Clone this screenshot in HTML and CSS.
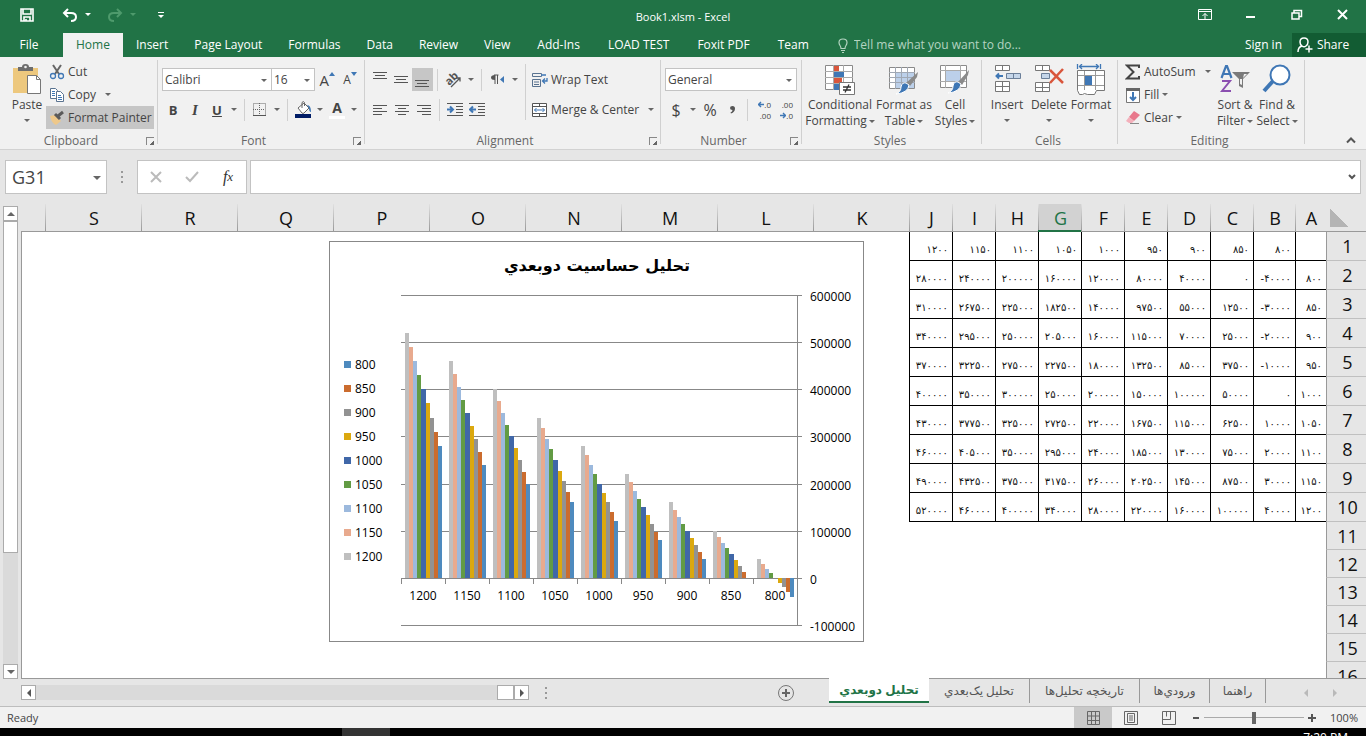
FILE: index.html
```html
<!DOCTYPE html>
<html lang="en">
<head>
    <meta charset="UTF-8">
    <meta name="viewport" content="width=device-width, initial-scale=1.0">
    <title>Book1.xlsm - Excel</title>
    <link rel="stylesheet" href="styles.css">
</head>
<body>
    <header class="titlebar">
        <div class="quick">
            <button class="qbtn save" aria-label="Save"><svg width="14" height="14" viewBox="0 0 14 14"><path d="M1 1h12v12H1zM3 1v5h8V1M4 13V9h6v4M6 11v2" fill="none" stroke="#fff" stroke-width="1.600"/></svg></button>
            <button class="qbtn undo" aria-label="Undo"><svg width="16" height="14" viewBox="0 0 16 14"><path d="M6 1L2 5l4 4M2 5h7q5 0 5 4t-5 4" fill="none" stroke="#fff" stroke-width="2"/></svg></button>
            <button class="qbtn" aria-label="Undo list"><i class="caret light"></i></button>
            <button class="qbtn redo" aria-label="Redo"><svg width="16" height="14" viewBox="0 0 16 14"><path d="M10 1l4 4-4 4M14 5H7q-5 0-5 4t5 4" fill="none" stroke="#4e9a6c" stroke-width="2"/></svg></button>
            <button class="qbtn" aria-label="Redo list"><i class="caret dim"></i></button>
            <button class="qbtn custom" aria-label="Customize toolbar"><i class="bar"></i><i class="caret light"></i></button>
        </div>
        <h1>Book1.xlsm - Excel</h1>
        <div class="window">
            <button aria-label="Ribbon display options"><svg width="14" height="12" viewBox="0 0 14 12"><path d="M.5.5h13v10H.5zM.5 2.500h13M7 10V4.500M4.500 7L7 4.500 9.500 7" fill="none" stroke="#fff"/></svg></button>
            <button aria-label="Minimize"><svg width="10" height="10"><path d="M0 6h9v2H0z" fill="#fff"/></svg></button>
            <button aria-label="Restore"><svg width="12" height="12" viewBox="0 0 12 12"><path d="M1 4h7v6H1zM3 4V1.500h7.500v6H8" fill="none" stroke="#fff" stroke-width="1.500"/></svg></button>
            <button aria-label="Close"><svg width="12" height="12" viewBox="0 0 12 12"><path d="M1 1l9 9M10 1l-9 9" stroke="#fff" stroke-width="2"/></svg></button>
        </div>
    </header>

    <nav class="tabs">
        <a href="#" class="file">File</a>
        <a href="#" class="active">Home</a>
        <a href="#">Insert</a>
        <a href="#">Page Layout</a>
        <a href="#">Formulas</a>
        <a href="#">Data</a>
        <a href="#">Review</a>
        <a href="#">View</a>
        <a href="#" class="addin">Add-Ins</a>
        <a href="#" class="addin">LOAD TEST</a>
        <a href="#" class="addin">Foxit PDF</a>
        <a href="#" class="addin">Team</a>
        <label class="tell" for="tell"><svg width="10" height="15" viewBox="0 0 10 15"><path d="M3 10.500Q3 9 2 7.500 1 6 1 4.500 1 1 5 1t4 3.500Q9 6 8 7.500T7 10.500zM3 12.500h4M4 14.500h2" fill="none" stroke="#b4d4c1" stroke-width="1.200"/></svg></label>
        <input type="text" id="tell" class="tell-input" placeholder="Tell me what you want to do...">
        <a href="#" class="signin">Sign in</a>
        <button class="share"><svg width="16" height="16" viewBox="0 0 16 16"><path d="M1 15q0-5 4-6Q3 7.500 3 5q0-4 4-4t4 4q0 2.500-2 4M5 9q2 1.500 4 0M12 8.500v7M8.500 12h7" fill="none" stroke="#fff" stroke-width="1.500"/></svg>Share</button>
    </nav>

    <section class="ribbon">
        <div class="group g-clip">
            <div class="body">
                <button class="big w38"><svg width="30" height="32" viewBox="0 0 30 32"><path d="M1 4h25v25H1z" fill="#edc87e"/><path d="M6 3h4q0-3 3.500-3T17 3h4v4H6z" fill="#6d6d6d"/><circle cx="13.500" cy="3" r="1.300" fill="#f1f1f1"/><path d="M15.500 11.500h9l4 4v14h-13z" fill="#fff" stroke="#777"/><path d="M24.500 11.500v4h4" fill="none" stroke="#777"/></svg><span>Paste</span><i class="caret"></i></button>
                <div class="stack">
                    <button class="item"><svg width="16" height="16" viewBox="0 0 16 16"><path d="M4 1l6 9M12 1L6 10" stroke="#666" stroke-width="2"/><circle cx="4" cy="12" r="2.500" fill="none" stroke="#3f77b5" stroke-width="1.300"/><circle cx="12" cy="12" r="2.500" fill="none" stroke="#3f77b5" stroke-width="1.300"/></svg>Cut</button>
                    <button class="item"><svg width="16" height="16" viewBox="0 0 16 16"><path d="M1.500 1.500h5l2 2v8h-7z" fill="#fff" stroke="#5a7390"/><path d="M3 4.500h3M3 6.500h3M3 8.500h3" stroke="#3f77b5"/><path d="M7.500 4.500h4l3 3v7h-7z" fill="#fff" stroke="#5a7390"/><path d="M9 8.500h3M9 10.500h4M9 12.500h4" stroke="#3f77b5"/></svg>Copy<i class="caret gap"></i></button>
                    <button class="item on"><svg width="16" height="16" viewBox="0 0 16 16"><path d="M1 6l5-1 6 6-5 4q-4-1-6-9z" fill="#eec88a"/><path d="M6 4l5 5M9 6l5-4" stroke="#5a5a5a" stroke-width="3"/></svg>Format Painter</button>
                </div>
            </div>
            <div class="name">Clipboard</div>
            <button class="launch" aria-label="Clipboard options"></button>
        </div>

        <div class="group g-font">
            <div class="rows">
                <div class="row">
                    <span class="pick font-name"><select aria-label="Font"><option>Calibri</option></select></span>
                    <span class="pick font-size"><select aria-label="Font size"><option>16</option></select></span>
                    <button class="tool grow" aria-label="Increase font size">A<svg width="6" height="4"><path d="M0 4l3-4 3 4z" fill="#3f77b5"/></svg></button>
                    <button class="tool grow small" aria-label="Decrease font size">A<svg width="6" height="4"><path d="M0 0h6L3 4z" fill="#3f77b5"/></svg></button>
                </div>
                <div class="row">
                    <button class="tool letter"><b>B</b></button>
                    <button class="tool letter"><b class="it">I</b></button>
                    <button class="tool letter"><b class="un">U</b></button>
                    <button class="drop" aria-label="Underline styles"><i class="caret"></i></button>
                    <i class="sep"></i>
                    <button class="tool" aria-label="Borders"><svg width="14" height="14" viewBox="0 0 14 14"><path d="M.5.5h12v12H.5zM6.500 0v12M0 6.500h12" fill="none" stroke="#666" stroke-dasharray="1 1"/><path d="M0 12.500h13" stroke="#555"/></svg></button>
                    <button class="drop" aria-label="Border styles"><i class="caret"></i></button>
                    <i class="sep"></i>
                    <button class="tool" aria-label="Fill color"><svg width="17" height="17" viewBox="0 0 17 17"><path d="M3 7l6-5 5 5-5 5q-1 1-2 0z" fill="#fff" stroke="#666"/><path d="M7 7V1.500q1.500-2 2.500 0V5" fill="none" stroke="#666"/><path d="M12 4q4 0 4 7-2 0-2-4z" fill="#3f77b5"/><path d="M0 13h16v4H0z" fill="#001c66"/></svg></button>
                    <button class="drop" aria-label="Fill colors"><i class="caret"></i></button>
                    <button class="tool color" aria-label="Font color"><b>A</b></button>
                    <button class="drop" aria-label="Font colors"><i class="caret"></i></button>
                </div>
            </div>
            <div class="name">Font</div>
            <button class="launch" aria-label="Font options"></button>
        </div>

        <div class="group g-align">
            <div class="cols">
                <div class="rows marks">
                    <div class="row">
                        <button class="tool" aria-label="Top align"><svg width="14" height="16"><path d="M0 .5h14M2 3.500h10M0 6.500h14" stroke="#555"/></svg></button>
                        <button class="tool" aria-label="Middle align"><svg width="14" height="16"><path d="M0 4.500h14M2 7.500h10M0 10.500h14" stroke="#555"/></svg></button>
                        <button class="tool on" aria-label="Bottom align"><svg width="14" height="16"><path d="M0 8.500h14M2 11.500h10M0 14.500h14" stroke="#555"/></svg></button>
                        <i class="sep"></i>
                        <button class="tool wide" aria-label="Orientation"><svg class="tilt" width="17" height="16" viewBox="0 0 17 16"><text x="1" y="12" font-size="11" font-weight="bold" fill="#555" transform="rotate(-45 5 9)">ab</text><path d="M6 15L15 6M11.500 6H15v3.500" fill="none" stroke="#555" stroke-width="1.300"/></svg></button>
                        <button class="drop slim" aria-label="Orientation list"><i class="caret"></i></button>
                        <i class="sep"></i>
                        <button class="tool wide" aria-label="Text direction"><svg width="14" height="12" viewBox="0 0 14 12"><path d="M4 1v9M6.500 1v9M3 1h4.500" fill="none" stroke="#555"/><path d="M4 1v5Q0 6 0 3.500T4 1z" fill="#555"/><path d="M13 2v7L9 5.500z" fill="#3f77b5"/></svg></button>
                        <button class="drop slim" aria-label="Text direction list"><i class="caret"></i></button>
                    </div>
                    <div class="row">
                        <button class="tool" aria-label="Align left"><svg width="14" height="14"><path d="M0 2.500h14M0 5.500h9M0 8.500h14M0 11.500h9" stroke="#555"/></svg></button>
                        <button class="tool" aria-label="Center"><svg width="14" height="14"><path d="M0 2.500h14M3 5.500h8M0 8.500h14M3 11.500h8" stroke="#555"/></svg></button>
                        <button class="tool" aria-label="Align right"><svg width="14" height="14"><path d="M0 2.500h14M5 5.500h9M0 8.500h14M5 11.500h9" stroke="#555"/></svg></button>
                        <i class="sep"></i>
                        <button class="tool" aria-label="Decrease indent"><svg width="16" height="14"><path d="M0 .5h16M9 3.500h7M9 6.500h7M9 9.500h7M0 12.500h16" stroke="#555"/><path d="M0 6.500h5M3 3.500l3 3-3 3" fill="none" stroke="#3f77b5" stroke-width="2"/></svg></button>
                        <button class="tool" aria-label="Increase indent"><svg width="16" height="14"><path d="M0 .5h16M9 3.500h7M9 6.500h7M9 9.500h7M0 12.500h16" stroke="#555"/><path d="M2 6.500h5M4 3.500l-3 3 3 3" fill="none" stroke="#3f77b5" stroke-width="2"/></svg></button>
                    </div>
                </div>
                <div class="rows wraps">
                    <button class="item"><svg width="16" height="16" viewBox="0 0 16 16"><path d="M.5 1.500h9v3h-9zM.5 7.500h8v7h-8zM2 10h5M2 12.500h5" fill="none" stroke="#5a7390"/><path d="M9 3h5M15 6v3h-4M13 6.500L10.500 9l2.500 2.500" fill="none" stroke="#3f77b5" stroke-width="1.300"/></svg>Wrap Text</button>
                    <button class="item"><svg width="16" height="16" viewBox="0 0 16 16"><path d="M.5 1.500h14v13H.5zM.5 4.500h14M.5 11.500h14M7.500 1.500v3M7.500 11.500v3" fill="#fff" stroke="#555"/><path d="M2.500 8h10M4.500 6l-2 2 2 2M10.500 6l2 2-2 2" fill="none" stroke="#3f77b5"/></svg>Merge &amp; Center<i class="caret gap"></i></button>
                </div>
            </div>
            <div class="name">Alignment</div>
            <button class="launch" aria-label="Alignment options"></button>
        </div>

        <div class="group g-num">
            <div class="rows">
                <div class="row">
                    <span class="pick format"><select aria-label="Number format"><option>General</option></select></span>
                </div>
                <div class="row">
                    <button class="tool sign">$</button>
                    <button class="drop slim" aria-label="Currencies"><i class="caret"></i></button>
                    <button class="tool sign">%</button>
                    <button class="tool comma" aria-label="Comma style"><svg width="5" height="8"><path d="M0 2q0-2 2.500-2T5 2.500Q5 6 1 7.500L.5 6.500Q2.500 5.500 2.500 4 0 4 0 2z" fill="#555"/></svg></button>
                    <i class="sep"></i>
                    <button class="tool dec"><span><svg width="6" height="7"><path d="M0 3.500h6M3 1L.5 3.500 3 6" fill="none" stroke="#3f77b5" stroke-width="1.400"/></svg>.0</span><span>.00</span></button>
                    <button class="tool dec"><span>.00</span><span><svg width="6" height="7"><path d="M0 3.500h6M3 1l2.500 2.500L3 6" fill="none" stroke="#3f77b5" stroke-width="1.400"/></svg>.0</span></button>
                </div>
            </div>
            <div class="name">Number</div>
            <button class="launch" aria-label="Number options"></button>
        </div>

        <div class="group g-style">
            <div class="body">
                <button class="big w68"><svg width="30" height="32" viewBox="0 0 30 32"><path d="M.5 1.500h27v24H.5z" fill="#fff" stroke="#8a8a8a"/><path d="M8.500 1v25M18.500 1v25M0 7.500h28M0 13.500h28M0 19.500h28" stroke="#aaa"/><path d="M9 2h5v5H9zM9 14h8v5H9z" fill="#d9563c"/><path d="M9 8h10v5H9zM9 20h5v6H9z" fill="#3f77b5"/><path d="M14.500 18.500h15v12h-15z" fill="#fff" stroke="#777"/><path d="M18 23h8M18 26h8M24 20.500l-4 8" stroke="#333" stroke-width="1.300"/></svg><span>Conditional<br>Formatting<i class="caret"></i></span></button>
                <button class="big w60"><svg width="30" height="32" viewBox="0 0 30 32"><path d="M.5 3.500h25v21H.5z" fill="#fff" stroke="#8a8a8a"/><path d="M7 9h18v15H7z" fill="#bcd0ea"/><path d="M6.500 3v22M12.500 3v22M18.500 3v22M0 8.500h26M0 13.500h26M0 18.500h26" stroke="#a0a8b4"/><path d="M29 8l-1 5-7 9-4-3z" fill="#8a8a8a"/><path d="M20 21q-1 8-13 9 5-2 5-7 1-5 5-4z" fill="#3f77b5" stroke="#fff"/></svg><span>Format as<br>Table<i class="caret"></i></span></button>
                <button class="big w42"><svg width="30" height="32" viewBox="0 0 30 32"><path d="M.5 1.500h26v22H.5z" fill="#fff" stroke="#8a8a8a"/><path d="M5.500 1v23M20.500 1v23M0 6.500h26M0 17.500h26" stroke="#aaa"/><path d="M6 7h14v10H6z" fill="#bcd0ea"/><path d="M29 6l-1 5-6 10-4-3z" fill="#8a8a8a"/><path d="M21 20q-1 8-13 9 5-2 5-7 1-5 5-4z" fill="#3f77b5" stroke="#fff"/></svg><span>Cell<br>Styles<i class="caret"></i></span></button>
            </div>
            <div class="name">Styles</div>
        </div>

        <div class="group g-cells">
            <div class="body">
                <button class="big w42"><svg width="28" height="32" viewBox="0 0 28 32"><path d="M2.500 1.500h14v5h-14zM9.500 1.500v5M2.500 17.500h14v10h-14zM9.500 17.500v10M2.500 22.500h14" fill="#fff" stroke="#777"/><path d="M13.500 9.500h14v5h-14zM20.500 9.500v5" fill="#c5d6ea" stroke="#6b7f99"/><path d="M3 12h7M6 9.500L3.500 12 6 14.500" fill="none" stroke="#3f77b5" stroke-width="2"/></svg><span>Insert</span><i class="caret"></i></button>
                <button class="big w42"><svg width="30" height="32" viewBox="0 0 30 32"><path d="M1.500 1.500h14v5h-14zM8.500 1.500v5M1.500 18.500h14v9h-14zM8.500 18.500v9M1.500 23.500h14" fill="#fff" stroke="#777"/><path d="M7.500 9.500h8v5h-8z" fill="#c5d6ea" stroke="#6b7f99"/><path d="M16 6l13 13M29 5L16 19" stroke="#d9563c" stroke-width="2.500"/></svg><span>Delete</span><i class="caret"></i></button>
                <button class="big w42"><svg width="30" height="32" viewBox="0 0 30 32"><path d="M1.500 0v5M24.500 0v5M3 2.500h20M6 0L3.500 2.500 6 5M20 0l2.500 2.500L20 5" fill="none" stroke="#3f77b5" stroke-width="1.300"/><path d="M1.500 6.500h27v20h-8l-2 4h-7l-3-1-2 1h-3l-2-4z" fill="#fff" stroke="#777"/><path d="M8.500 7v19M19.500 7v19M2 11.500h26M2 21.500h26" stroke="#999"/><path d="M9 12h7v9H9z" fill="#3f77b5"/></svg><span>Format</span><i class="caret"></i></button>
            </div>
            <div class="name">Cells</div>
        </div>

        <div class="group g-edit">
            <div class="body">
                <div class="stack">
                    <button class="item"><svg width="16" height="16" viewBox="0 0 16 16"><path d="M14 4V1.500H2L8.500 8 2 14.500h12V12" fill="none" stroke="#444" stroke-width="2"/></svg>AutoSum<i class="caret gap"></i></button>
                    <button class="item"><svg width="16" height="16" viewBox="0 0 16 16"><path d="M1.500 1.500h13v14h-13z" fill="#fff" stroke="#777"/><path d="M1 1h14v3H1z" fill="#666"/><path d="M8 5v8M5 10l3 3 3-3" fill="none" stroke="#3f77b5" stroke-width="2"/></svg>Fill<i class="caret"></i></button>
                    <button class="item"><svg width="16" height="16" viewBox="0 0 16 16"><path d="M9 1l6 4-6 6-5-4z" fill="#e8788c"/><path d="M4 7l5 4-2 2H4l-3-2z" fill="#f4b0bb"/><path d="M5 13.500h9" stroke="#888"/></svg>Clear<i class="caret"></i></button>
                </div>
                <button class="big w42"><svg width="30" height="32" viewBox="0 0 30 32"><path d="M1.500 14L6 2h1l4.500 12M3 10h7" fill="none" stroke="#3f77b5" stroke-width="2.200"/><path d="M2 17h8L2 27h9" fill="none" stroke="#8b4fb0" stroke-width="2"/><path d="M12 8h18l-7 7v9l-4-2v-7z" fill="#7a7a7a"/><path d="M20 15h2v6l-2-1zM24 10h3l-4 4z" fill="#f1f1f1"/></svg><span>Sort &amp;<br>Filter<i class="caret"></i></span></button>
                <button class="big w42"><svg width="30" height="32" viewBox="0 0 30 32"><path d="M11 17L2 27" stroke="#3f77b5" stroke-width="4"/><circle cx="18" cy="11" r="9.500" fill="#fff" stroke="#3f77b5" stroke-width="2"/></svg><span>Find &amp;<br>Select<i class="caret"></i></span></button>
            </div>
            <div class="name">Editing</div>
        </div>
        <button class="collapse" aria-label="Collapse the ribbon"><svg width="10" height="7"><path d="M1 5.500l4-4 4 4" fill="none" stroke="#555" stroke-width="2"/></svg></button>
    </section>

    <section class="formula">
        <span class="pick name-box"><input type="text" aria-label="Name box" value="G31"></span>
        <i class="dots"></i>
        <div class="fx">
            <button aria-label="Cancel"><svg width="12" height="12"><path d="M1 1l10 10M11 1L1 11" stroke="#bbb" stroke-width="2"/></svg></button>
            <button aria-label="Enter"><svg width="14" height="12"><path d="M1 6l4 4 8-9" fill="none" stroke="#bbb" stroke-width="2"/></svg></button>
            <button class="fn">f<sub>x</sub></button>
        </div>
        <div class="entry">
            <input type="text" aria-label="Formula">
            <button aria-label="Expand formula bar"><svg width="8" height="6"><path d="M1 1l3 3 3-3" fill="none" stroke="#555" stroke-width="2"/></svg></button>
        </div>
    </section>

    <main class="sheet">
        <div class="vscroll">
            <button aria-label="Scroll up"><i class="tri up"></i></button>
            <div class="track"><div class="thumb"></div></div>
            <button aria-label="Scroll down"><i class="tri down"></i></button>
        </div>
        <div class="grid" dir="rtl">
            <table>
                <colgroup>
                    <col class="c-row"><col class="c-a"><col class="c-b"><col class="c-data" span="8"><col class="c-wide" span="9"><col>
                </colgroup>
                <thead><tr id="letters"><th class="corner"></th></tr></thead>
                <tbody id="cells"></tbody>
            </table>
            <figure class="chart">
                <svg id="chart" width="533" height="399" viewBox="0 0 533 399" direction="ltr" role="img" aria-label="تحليل حساسيت دوبعدي"></svg>
            </figure>
        </div>
    </main>

    <section class="sheetbar">
        <div class="hscroll">
            <button aria-label="Scroll left"><i class="tri left"></i></button>
            <div class="track"></div>
            <div class="thumb"></div>
            <button aria-label="Scroll right"><i class="tri right"></i></button>
        </div>
        <i class="dots"></i>
        <button class="add" aria-label="New sheet"><svg width="16" height="16"><circle cx="8" cy="8" r="7.500" fill="none" stroke="#777"/><path d="M4 8h8M8 4v8" stroke="#666" stroke-width="2"/></svg></button>
        <nav class="sheets" dir="rtl">
            <a href="#" class="s1">راهنما</a>
            <a href="#" class="s2">ورودي‌ها</a>
            <a href="#" class="s3">تاريخچه تحليل‌ها</a>
            <a href="#" class="s4">تحليل يک‌بعدي</a>
            <a href="#" class="s5 active">تحليل دوبعدي</a>
        </nav>
        <div class="move"><i class="tri left"></i><i class="tri right"></i></div>
    </section>

    <footer class="status">
        <span class="ready">Ready</span>
        <button class="on" aria-label="Normal"><svg width="13" height="14"><path d="M.5.5h12v13H.5zM4.500 0v14M8.500 0v14M0 5h13M0 9.500h13" fill="none" stroke="#666"/></svg></button>
        <button aria-label="Page layout"><svg width="14" height="14"><path d="M.5.5h13v13H.5zM3.500 2.500h7v9h-7zM5 5h4M5 7h4M5 9h4" fill="none" stroke="#666"/></svg></button>
        <button aria-label="Page break preview"><svg width="14" height="14"><path d="M.5.5h13v13H.5zM.5 8.500h8v-8M4.500.5v5" fill="none" stroke="#666"/></svg></button>
        <button class="zoom-btn" aria-label="Zoom out"><svg width="8" height="8"><path d="M1 4h6" stroke="#555" stroke-width="2"/></svg></button>
        <input type="range" class="zoom" aria-label="Zoom" min="0" max="100" value="50">
        <button class="zoom-btn" aria-label="Zoom in"><svg width="8" height="8"><path d="M0 4h8M4 0v8" stroke="#555" stroke-width="2"/></svg></button>
        <span class="percent">100%</span>
    </footer>
    <div class="taskbar"><i class="task"></i><span>7:20 PM</span></div>

    <script src="script.js"></script>
</body>
</html>
```
FILE: styles.css
```css
* { box-sizing: border-box; }
body { margin: 0; height: 100vh; display: flex; flex-direction: column; overflow: hidden; background: #e6e6e6; color: #444; font: 12px/16px "Open Sans", "DejaVu Sans", sans-serif; }
button, input, select { font: inherit; color: inherit; border: none; background: none; padding: 0; margin: 0; }
button { display: flex; align-items: center; justify-content: center; cursor: pointer; }
a { color: inherit; text-decoration: none; }
svg { display: block; flex: none; }

.caret { display: inline-block; flex: none; border: 3px solid transparent; border-top-color: #666; border-bottom: none; vertical-align: middle; }
.caret.light { border-top-color: #fff; }
.caret.dim { border-top-color: #4e9a6c; }
.tri { border: 4px solid transparent; }
.tri.up { border-bottom-color: #666; border-top: none; }
.tri.down { border-top-color: #666; border-bottom: none; }
.tri.left { border-right-color: #555; border-left: none; }
.tri.right { border-left-color: #555; border-right: none; }
.dots { width: 2px; height: 12px; background: repeating-linear-gradient(#999 0 2px, transparent 2px 5px); }

/* title bar */
.titlebar { display: grid; grid-template-columns: 1fr auto 1fr; height: 33px; flex: none; background: #217346; color: #fff; }
.titlebar h1 { margin: 0; font-size: 11px; font-weight: normal; line-height: 33px; }
.quick { display: flex; padding: 0 0 4px 20px; }
.qbtn { width: 14px; }
.undo { margin-left: 29px; margin-right: 4px; }
.redo { margin-left: 13px; margin-right: 4px; }
.custom { flex-direction: column; gap: 2px; margin-left: 14px; }
.bar { width: 6px; height: 1px; background: #fff; }
.window { display: flex; justify-content: flex-end; }
.window button { width: 46px; padding-bottom: 3px; }

/* ribbon tabs */
.tabs { display: flex; height: 24px; flex: none; background: #217346; color: #fff; font-size: 12px; line-height: 24px; }
.tabs a { padding: 0 13px; white-space: nowrap; }
.tabs .addin { padding: 0 14px; }
.tabs .file { width: 58px; margin-right: 5px; text-align: center; }
.tabs .active { background: #f1f1f1; color: #217346; }
.tell { display: flex; align-items: center; margin-left: 15px; }
.tell-input { flex: 1; min-width: 100px; padding-left: 6px; }
.tell-input::placeholder { color: #b4d4c1; }
.tabs .signin { padding: 0 10px; }
.share { width: 74px; gap: 4px; padding-right: 12px; background: #125c33; color: #fff; }

/* ribbon */
.ribbon { position: relative; display: flex; height: 93px; flex: none; background: #f1f1f1; border-bottom: 1px solid #d2d2d2; font-size: 12px; }
.group { position: relative; display: flex; flex-direction: column; justify-content: space-between; }
.group::after { content: ""; position: absolute; right: 0; top: 3px; bottom: 5px; width: 1px; background: #d0d0d0; }
.name { height: 16px; text-align: center; color: #666; }
.g-clip { width: 158px; }
.g-font { width: 207px; }
.g-align { width: 296px; }
.g-num { width: 141px; }
.g-style { width: 180px; }
.g-cells { width: 136px; }
.g-edit { width: 187px; }
.group .name { padding-right: 16px; }
.g-style .name, .g-cells .name, .g-edit .name { padding-right: 4px; }
.launch { position: absolute; right: 4px; bottom: 4px; width: 8px; height: 8px; border: 1px solid #888; border-right: none; border-bottom: none; }
.launch::after { content: ""; width: 4px; height: 4px; margin: 3px 0 0 3px; background: linear-gradient(135deg, transparent 50%, #666 50%); }
.body { display: flex; padding: 3px 3px 0 4px; }
.big { flex-direction: column; justify-content: flex-start; padding-top: 4px; height: 72px; line-height: 16px; white-space: nowrap; }
.big svg { margin-bottom: 1px; }
.big > .caret { margin-top: 6px; }
.big span .caret { margin-left: 2px; }
.w38 { width: 38px; }
.w42 { width: 42px; }
.w60 { width: 60px; }
.w68 { width: 68px; }
.stack { display: flex; flex-direction: column; }
.item { height: 23px; justify-content: flex-start; gap: 3px; padding: 0 3px; white-space: nowrap; }
.item.on, .tool.on { background: #c6c6c6; }
.item .caret.gap { margin-left: 6px; }
.g-clip .body { padding-left: 8px; }
.g-clip .stack { width: 108px; }
.g-edit .stack { width: 92px; }

.rows { display: flex; flex-direction: column; gap: 7px; padding: 11px 4px 0; }
.row { display: flex; align-items: center; height: 23px; }
.cols { display: flex; }
.marks { width: 160px; }
.wraps { position: relative; }
.wraps::before { content: ""; position: absolute; left: 0; top: 7px; height: 56px; width: 1px; background: #d0d0d0; }
.tilt { overflow: visible; }
.tool { width: 22px; height: 23px; }
.tool.wide { width: 24px; }
.letter { font-size: 13px; }
.it { font-family: "Liberation Serif", serif; font-style: italic; font-size: 15px; }
.un { text-decoration: underline; }
.drop { width: 12px; height: 23px; }
.sep { width: 1px; height: 22px; margin: 0 4px; background: #d0d0d0; }
.grow { gap: 0; font-size: 15px; align-items: center; margin-left: 1px; }
.grow svg { align-self: flex-start; margin-top: 4px; }
.grow.small { font-size: 12px; }
.color b { font-size: 14px; border-bottom: 3px solid #fff; line-height: 16px; padding: 0 3px; }
.sign { font-size: 16px; }
.dec { flex-direction: column; align-items: flex-end; justify-content: center; font-size: 8px; line-height: 11px; padding-right: 3px; }
.dec span { display: flex; align-items: center; }

.pick { position: relative; display: inline-flex; height: 23px; border: 1px solid #c3c3c3; background: #fff; }
.pick select { width: 100%; appearance: none; padding-left: 2px; }
.pick::after { content: ""; position: absolute; right: 4px; top: 50%; margin-top: -1px; border: 3px solid transparent; border-top-color: #666; border-bottom: none; pointer-events: none; }
.font-name { width: 111px; }
.font-size { width: 45px; margin-left: -1px; }
.format { width: 132px; }
.collapse { position: absolute; right: 10px; bottom: 5px; }

/* formula bar */
.formula { display: flex; align-items: center; height: 54px; flex: none; padding: 0 5px; }
.name-box { width: 102px; height: 34px; font-size: 18px; }
.name-box input { width: 100%; padding-left: 6px; }
.name-box::after { right: 5px; border-width: 4px; border-bottom: none; }
.formula .dots { margin: 0 14px; }
.fx { display: flex; width: 110px; height: 34px; border: 1px solid #c3c3c3; background: #fff; }
.fx button { flex: 1; }
.fx .fn { font: italic 16px "Liberation Serif", serif; color: #333; }
.fn sub { font-size: 13px; }
.entry { display: flex; flex: 1; height: 34px; margin-left: 3px; border: 1px solid #c3c3c3; background: #fff; }
.entry input { flex: 1; }
.entry button { width: 16px; }

/* sheet */
.sheet { display: flex; flex: 1; min-height: 0; }
.vscroll { display: flex; flex-direction: column; width: 21px; padding: 2px 3px 0; }
.vscroll button, .hscroll button { width: 15px; height: 15px; flex: none; border: 1px solid #ababab; background: #fff; }
.track { flex: 1; background: #dadada; }
.vscroll .thumb { height: 75%; border: 1px solid #ababab; background: #fff; }
.grid { position: relative; flex: 1; overflow: hidden; border-bottom: 1px solid #999; }
.grid table { width: 100%; table-layout: fixed; border-collapse: separate; border-spacing: 0; color: #111; }
.c-row { width: 40px; }
.c-a { width: 31px; }
.c-b { width: 42px; }
.c-data { width: 43px; }
.c-wide { width: 96px; }
th { padding: 0 0 0 2px; font-size: 18px; line-height: 24px; font-weight: normal; background: #e6e6e6; }
thead th { height: 28px; border-bottom: 1px solid #999; background: linear-gradient(#e0e0e0, #999) left / 1px 100% no-repeat #e6e6e6; }
thead th:last-child { background: #e6e6e6; }
thead th.current { padding-top: 1px; background-color: #d2d2d2; color: #217346; border-bottom: 2px solid #217346; }
thead .corner { background: linear-gradient(45deg, #b4b4b4 50%, transparent 50%) 4px 5px / 20px 18px no-repeat #e6e6e6; }
tbody th { height: 28px; border-left: 1px solid #999; border-bottom: 1px solid #c0c0c0; }
tbody td { padding: 0; background: #fff; }
.data th { height: 29px; }
.data td { direction: ltr; padding: 7px 3px 0 0; text-align: right; font: 10px/14px "DejaVu Sans", sans-serif; border-left: 1px solid #000; border-bottom: 1px solid #000; white-space: nowrap; }
tbody td.rest { border: none; border-left: 1px solid #999; }

/* the chart floats over the cells */
.chart { position: absolute; right: 502px; top: 37px; margin: 0; border: 1px solid #888; background: #fff; }
.chart text { font-size: 12px; fill: #000; }
.chart .title { font: bold 16px "DejaVu Sans", sans-serif; }
.chart path { fill: none; stroke: #888; }

/* sheet tabs */
.sheetbar { display: flex; align-items: center; height: 28px; flex: none; border-bottom: 1px solid #bdbdbd; }
.hscroll { display: flex; flex: 508; margin-left: 21px; }
.hscroll .thumb { width: 17px; border: 1px solid #ababab; background: #fff; }
.sheetbar .dots { margin: 0 16px; }
.add { flex: 266; }
.add svg { margin-left: 180px; }
.sheets { display: flex; align-self: flex-start; color: #555; font-size: 12px; line-height: 24px; }
.sheets a { height: 24px; border-right: 1px solid #999; text-align: center; white-space: nowrap; }
.sheets a:last-child { border-right: none; }
.s1 { width: 56px; }
.s2 { width: 70px; }
.s3 { width: 110px; }
.s4 { width: 101px; }
.s5 { width: 100px; }
.sheets .active { position: relative; top: -1px; height: 25px; background: #fff; color: #217346; font-weight: bold; border-bottom: 2px solid #217346; }
.move { display: flex; gap: 25px; width: 100px; padding-left: 38px; opacity: 0.3; }

/* status bar */
.status { display: flex; align-items: center; height: 21px; flex: none; padding-right: 8px; background: #f1f1f1; font-size: 11px; }
.ready { flex: 1; padding-left: 7px; }
.status button { width: 38px; height: 21px; }
.status button.on { background: #c9c9c9; }
.status .zoom-btn { width: 16px; }
.zoom { width: 100px; height: 21px; appearance: none; background: linear-gradient(#aaa, #aaa) center / 100% 1px no-repeat; }
.zoom::-webkit-slider-thumb { appearance: none; width: 4px; height: 12px; background: #666; }
.percent { width: 38px; text-align: right; }

.taskbar { display: flex; height: 8px; flex: none; overflow: hidden; background: #000; color: #fff; }
.task { width: 48px; margin-left: 342px; background: #333; }
.taskbar span { margin: 2px 18px 0 auto; }
```
FILE: script.js
```js
const prices = [800, 850, 900, 950, 1000, 1050, 1100, 1150, 1200];
const colors = ["#4e8abe", "#cb6c2e", "#929292", "#dba80f", "#4067a8", "#629b44", "#9cb9dd", "#e8aa8e", "#bfbfbf"];

// profit for row price j and column price i
function profit(j, i) {
    return -40000 + 10000 * j + (40000 + 2500 * j) * i;
}

function persian(n) {
    return String(n).replace(/\d/g, d => "۰۱۲۳۴۵۶۷۸۹"[d]);
}

function fillSheet() {
    let head = document.getElementById("letters");
    "ABCDEFGHIJKLMNOPQRS".split("").forEach(letter => {
        head.innerHTML += `<th${letter === "G" ? ' class="current"' : ""}>${letter}</th>`;
    });
    head.innerHTML += "<th></th>";

    let rows = "";
    for (let r = 1; r <= 16; r++) {
        if (r > 10) {
            rows += `<tr><th>${r}</th><td class="rest" colspan="20"></td></tr>`;
            continue;
        }
        let values = r === 1 ? ["", ...prices] : [prices[r - 2], ...prices.map((p, i) => profit(r - 2, i))];
        rows += `<tr class="data"><th>${r}</th>` + values.map(v => `<td>${persian(v)}</td>`).join("") + '<td class="rest" colspan="10"></td></tr>';
    }
    document.getElementById("cells").innerHTML = rows;
}

function drawChart() {
    const left = 71, right = 467, zero = 336, unit = 47.2 / 100000, step = 44;
    let out = '<text class="title" x="267" y="29" text-anchor="middle" direction="rtl">تحليل حساسيت دوبعدي</text>';
    for (let v = 600000; v >= -100000; v -= 100000) {
        let y = Math.round(zero - v * unit) + 0.5;
        out += `<path d="M${left} ${y}H${right + 5}"/><text x="480" y="${y + 5}">${v}</text>`;
    }
    prices.forEach((p, k) => {
        let x = left + (8 - k) * step;
        out += `<path d="M${x + 0.5} ${zero}v6"/>`;
        prices.forEach((q, j) => {
            let v = profit(j, k);
            let a = Math.round(x + 4 + (8 - j) * 4.1), b = Math.round(x + 4 + (9 - j) * 4.1);
            let h = Math.round(Math.abs(v) * unit);
            out += `<rect x="${a}" y="${v > 0 ? zero - h : zero}" width="${b - a}" height="${h}" fill="${colors[j]}"/>`;
        });
        out += `<text x="${x + 22}" y="358" text-anchor="middle">${p}</text>`;
        out += `<rect x="14" y="${119 + k * 24}" width="7" height="7" fill="${colors[k]}"/><text x="25" y="${127 + k * 24}">${p}</text>`;
    });
    out += `<path d="M${right + 0.5} 53V384"/>`;
    document.getElementById("chart").innerHTML = out;
}

fillSheet();
drawChart();
```
